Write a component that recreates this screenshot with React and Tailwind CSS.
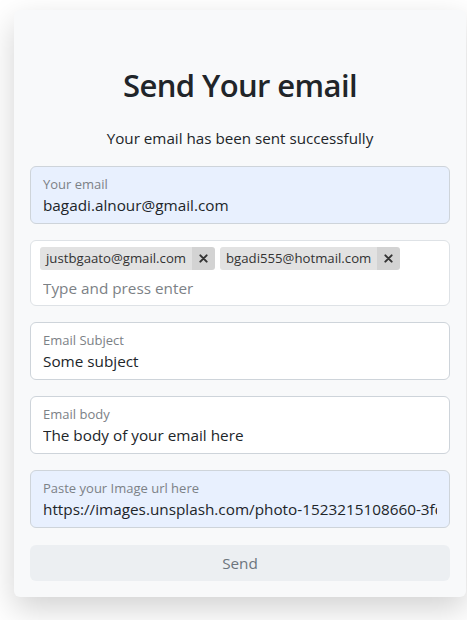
import React, { useState } from 'react';

const font = { fontFamily: '"Open Sans", "Noto Sans", sans-serif' };

function FloatingField({ label, value, filled }) {
  return (
    <div
      className={`h-[58px] w-full rounded-[6px] border border-[#ced4da] px-[12px] pt-[9px] ${
        filled ? 'bg-[#e8f0fe]' : 'bg-white'
      }`}
    >
      <div className="text-[13px] leading-[17px] text-[#7c8186]">{label}</div>
      <input
        readOnly
        value={value}
        className="block w-full bg-transparent p-0 text-[15.3px] leading-6 text-[#212529] outline-none"
      />
    </div>
  );
}

function Tag({ text, onRemove }) {
  return (
    <span className="inline-flex h-[23px] items-stretch rounded-[3px] overflow-hidden">
      <span className="bg-[#e2e2e2] px-[6px] text-[13.2px] leading-[23px] text-[#333]">
        {text}
      </span>
      <button
        onClick={onRemove}
        className="bg-[#d3d3d3] w-[23px] flex items-center justify-center"
      >
        <svg width="9" height="9" viewBox="0 0 10 10">
          <path d="M1.5 1.5 L8.5 8.5 M8.5 1.5 L1.5 8.5" stroke="#333" strokeWidth="2.2" strokeLinecap="round" />
        </svg>
      </button>
    </span>
  );
}

export default function App() {
  const [tags, setTags] = useState(['justbgaato@gmail.com', 'bgadi555@hotmail.com']);

  return (
    <div className="min-h-screen bg-white pt-[10px] pl-[14px]" style={font}>
      <div className="w-[452px] rounded-[6px] bg-[#f8f9fa] px-[16px] pb-[16px] shadow-[0_12px_32px_rgba(0,0,0,0.18)]">
        <h1 className="pt-[55px] text-center text-[31px] font-semibold leading-[40px] text-[#212529] tracking-[-0.6px]">
          Send Your email
        </h1>
        <p className="mt-[21px] text-center text-[15.2px] leading-6 text-[#212529]">
          Your email has been sent successfully
        </p>

        <div className="mt-[16px] flex flex-col gap-4">
          <FloatingField label="Your email" value="bagadi.alnour@gmail.com" filled />

          <div className="w-full rounded-[6px] border border-[#dee2e6] bg-white px-[9px] pt-[6px] pb-[5px]">
            <div className="flex flex-wrap gap-[5px]">
              {tags.map((t) => (
                <Tag key={t} text={t} onRemove={() => setTags(tags.filter((x) => x !== t))} />
              ))}
            </div>
            <input
              placeholder="Type and press enter"
              className="mt-[6px] block w-full bg-transparent pl-[3px] text-[15.3px] leading-6 text-[#212529] outline-none placeholder:text-[#7c8186]"
            />
          </div>

          <FloatingField label="Email Subject" value="Some subject" />
          <FloatingField label="Email body" value="The body of your email here" />
          <FloatingField
            label="Paste your Image url here"
            value="https://images.unsplash.com/photo-1523215108660-3fdf7932d7a5"
            filled
          />

          <button className="mt-[1px] h-[36px] w-full rounded-[6px] bg-[#eceff2] text-[15.3px] text-[#6c757d]">
            Send
          </button>
        </div>
      </div>
    </div>
  );
}
